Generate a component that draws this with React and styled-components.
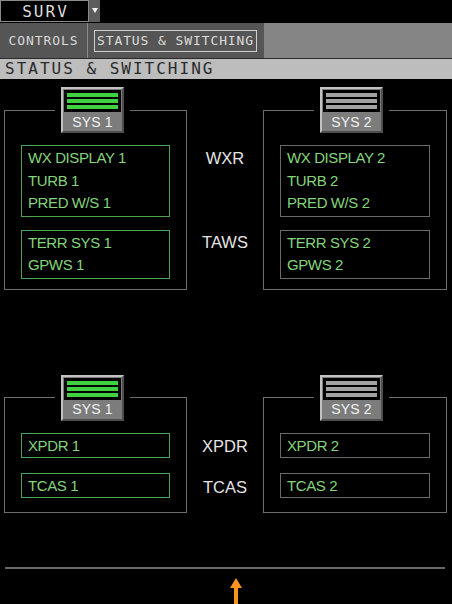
import styled, { createGlobalStyle } from 'styled-components';

const GlobalStyle = createGlobalStyle`
  html, body { margin: 0; padding: 0; background: #000; }
  body {
    width: 452px;
    height: 604px;
    overflow: hidden;
    font-family: "Liberation Sans", Arial, sans-serif;
  }
`;

const MONO = '"DejaVu Sans Mono", "Liberation Mono", monospace';

const TopRow = styled.div`
  display: flex;
  height: 23px;
`;

const SurvBox = styled.div`
  width: 89px;
  height: 22px;
  box-sizing: border-box;
  border: 1px solid #8a8a8a;
  background: #000;
  color: #dcdcdc;
  font-family: ${MONO};
  font-size: 16px;
  letter-spacing: 2px;
  padding-left: 2px;
  display: flex;
  align-items: center;
  justify-content: center;
`;

const Caret = styled.div`
  width: 11px;
  height: 22px;
  background: #5c5c5c;
  display: flex;
  justify-content: center;
  padding-top: 8px;
  box-sizing: border-box;
  &::after {
    content: '';
    width: 0;
    height: 0;
    border-left: 3px solid transparent;
    border-right: 3px solid transparent;
    border-top: 5px solid #f2f2f2;
  }
`;

const TabBar = styled.div`
  display: flex;
  height: 35px;
  border-bottom: 1px solid #2a2a2a;
`;

const Tabs = styled.div`
  width: 264px;
  display: flex;
  background: #555;
`;

const Tab = styled.div`
  width: 87px;
  border-right: 1px solid #8c8c8c;
  color: #d8d8d8;
  font-family: ${MONO};
  font-size: 13px;
  letter-spacing: 0.9px;
  display: flex;
  align-items: center;
  justify-content: center;
`;

const ActiveTab = styled.div`
  flex: 1;
  display: flex;
  align-items: center;
  padding-left: 6px;
`;

const TabFrame = styled.span`
  width: 163px;
  height: 22px;
  box-sizing: border-box;
  border: 1px solid #cfcfcf;
  color: #dcdcdc;
  font-family: ${MONO};
  font-size: 13px;
  letter-spacing: 0.9px;
  display: flex;
  align-items: center;
  justify-content: center;
`;

const TabFill = styled.div`
  flex: 1;
  background: #858585;
`;

const Title = styled.div`
  height: 20px;
  line-height: 20px;
  background: #bdbdbd;
  color: #2b2b2b;
  font-family: ${MONO};
  font-size: 16px;
  letter-spacing: 2px;
  padding-left: 5px;
`;

const Main = styled.div`
  padding-top: 8px;
`;

const Section = styled.div`
  display: grid;
  grid-template-columns: 183px 76px 184px;
  padding-left: 4px;
  margin-bottom: ${p => p.$after}px;
`;

const Panel = styled.fieldset`
  margin: 0;
  padding: 0;
  min-width: 0;
  border: 1px solid #6e6e6e;
`;

const Legend = styled.legend`
  margin-left: 50px;
  padding: 0 6px;
`;

const SysButton = styled.div`
  width: 63px;
  height: 46px;
  box-sizing: border-box;
  border: 2px solid;
  border-color: #c2c2c2 #4e4e4e #4e4e4e #c2c2c2;
  background: #7c7c7c;
  display: flex;
  flex-direction: column;
`;

const Window = styled.div`
  height: 22px;
  box-sizing: border-box;
  margin: 1px 1px 0;
  background: #000;
  padding: 3px 3px;
  display: flex;
  flex-direction: column;
  gap: 2px;
`;

const Bar = styled.div`
  height: 4px;
  background: ${p => (p.$on ? '#3fd13f' : '#a2a2a2')};
`;

const SysLabel = styled.div`
  flex: 1;
  display: flex;
  align-items: center;
  justify-content: center;
  color: #f2f2f2;
  font-size: 14px;
  letter-spacing: 0.2px;
`;

const Body = styled.div`
  display: flex;
  flex-direction: column;
  gap: ${p => p.$gap}px;
  padding: 12px 16px ${p => p.$pb}px 16px;
`;

const InfoBox = styled.div`
  border: 1px solid ${p => (p.$on ? '#4ea24a' : '#6a6a6a')};
  padding: ${p => (p.$single ? '0 6px' : '1px 6px')};
  color: #84d47d;
  font-size: 15px;
  letter-spacing: -0.4px;
  line-height: ${p => (p.$single ? '23px' : '22.5px')};
`;

const Labels = styled.div`
  display: flex;
  flex-direction: column;
  align-items: center;
  padding-top: 61px;
`;

const Label = styled.div`
  color: #e4e4e4;
  font-size: 16.5px;
  line-height: 20px;
  margin-top: ${p => p.$top || 0}px;
`;

const Rule = styled.div`
  height: 2px;
  margin: 0 7px 0 5px;
  background: #6a6a6a;
`;

const Pointer = styled.div`
  padding: 9px 0 0 229px;
  line-height: 0;
`;

function Sys({ n, on }) {
  return (
    <Legend>
      <SysButton>
        <Window>
          <Bar $on={on} />
          <Bar $on={on} />
          <Bar $on={on} />
        </Window>
        <SysLabel>SYS {n}</SysLabel>
      </SysButton>
    </Legend>
  );
}

function SysPanel({ n, on, groups, single, gap, pb }) {
  return (
    <Panel>
      <Sys n={n} on={on} />
      <Body $gap={gap} $pb={pb}>
        {groups.map((g, i) => (
          <InfoBox key={i} $on={on} $single={single}>
            {g.map(line => (
              <div key={line}>{line}</div>
            ))}
          </InfoBox>
        ))}
      </Body>
    </Panel>
  );
}

export default function App() {
  return (
    <>
      <GlobalStyle />
      <TopRow>
        <SurvBox>SURV</SurvBox>
        <Caret />
      </TopRow>
      <TabBar>
        <Tabs>
          <Tab>CONTROLS</Tab>
          <ActiveTab>
            <TabFrame>STATUS &amp; SWITCHING</TabFrame>
          </ActiveTab>
        </Tabs>
        <TabFill />
      </TabBar>
      <Title>STATUS &amp; SWITCHING</Title>

      <Main>
        <Section $after={85}>
          <SysPanel
            n={1}
            on
            gap={13}
            pb={10}
            groups={[['WX DISPLAY 1', 'TURB 1', 'PRED W/S 1'], ['TERR SYS 1', 'GPWS 1']]}
          />
          <Labels>
            <Label>WXR</Label>
            <Label $top={64}>TAWS</Label>
          </Labels>
          <SysPanel
            n={2}
            gap={13}
            pb={10}
            groups={[['WX DISPLAY 2', 'TURB 2', 'PRED W/S 2'], ['TERR SYS 2', 'GPWS 2']]}
          />
        </Section>

        <Section $after={54}>
          <SysPanel n={1} on single gap={15} pb={14} groups={[['XPDR 1'], ['TCAS 1']]} />
          <Labels>
            <Label>XPDR</Label>
            <Label $top={21}>TCAS</Label>
          </Labels>
          <SysPanel n={2} single gap={15} pb={14} groups={[['XPDR 2'], ['TCAS 2']]} />
        </Section>

        <Rule />
        <Pointer>
          <svg width="14" height="26" viewBox="0 0 14 26">
            <polygon points="7,0 13,10 9,10 9,26 5,26 5,10 1,10" fill="#f7931e" />
          </svg>
        </Pointer>
      </Main>
    </>
  );
}
